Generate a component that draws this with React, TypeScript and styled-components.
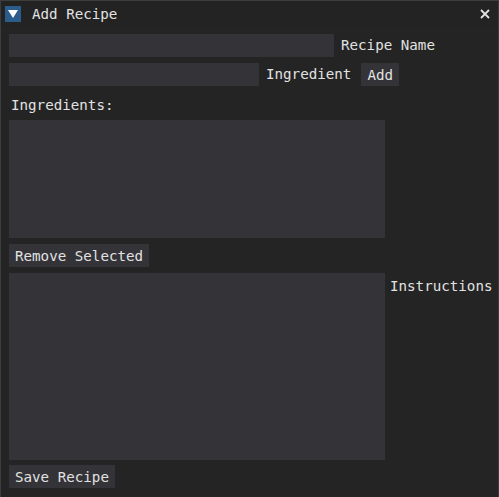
import React from "react";
import styled, { createGlobalStyle } from "styled-components";

const Global = createGlobalStyle`
  html, body { margin: 0; padding: 0; background: #242424; }
  body { width: 499px; height: 497px; overflow: hidden; }
`;

const Win = styled.div`
  box-sizing: border-box;
  width: 499px;
  height: 497px;
  background: #242424;
  border: 1px solid #3d3d3d;
  border-bottom: none;
  font-family: "DejaVu Sans Mono", "Liberation Mono", monospace;
  font-size: 14.2px;
  color: #e2e2e2;
  display: flex;
  flex-direction: column;
`;

const TitleBar = styled.div`
  height: 26px;
  display: flex;
  align-items: center;
  padding: 0 4px;
  gap: 11px;
  background: #232323;
`;

const Collapse = styled.div`
  width: 16px;
  height: 16px;
  background: #2a5d8c;
  display: flex;
  align-items: center;
  justify-content: center;
`;

const Title = styled.span`
  flex: 1;
  line-height: 1;
`;

const Close = styled.div`
  width: 16px;
  height: 16px;
  display: flex;
  align-items: center;
  justify-content: center;
  margin-right: 1px;
`;

const Body = styled.div`
  padding: 7px 8px 0 8px;
  display: flex;
  flex-direction: column;
  gap: 6px;
`;

const Row = styled.div<{ $gap?: number; $top?: boolean }>`
  display: flex;
  align-items: ${(p) => (p.$top ? "flex-start" : "center")};
  gap: ${(p) => p.$gap ?? 6}px;
`;

const Frame = styled.div<{ $w: number; $h: number }>`
  width: ${(p) => p.$w}px;
  height: ${(p) => p.$h}px;
  background: #333338;
  flex: none;
`;

const Label = styled.span<{ $pt?: number }>`
  white-space: nowrap;
  padding-top: ${(p) => p.$pt ?? 0}px;
  line-height: 1;
`;

const Button = styled.div<{ $ml?: number }>`
  height: 23px;
  padding: 0 6px;
  margin-left: ${(p) => p.$ml ?? 0}px;
  background: #333338;
  display: flex;
  align-items: center;
  white-space: nowrap;
  flex: none;
`;

const Text = styled.div<{ $ml?: number; $mt?: number }>`
  margin-left: ${(p) => p.$ml ?? 0}px;
  margin-top: ${(p) => p.$mt ?? 0}px;
  line-height: 18px;
`;

const Left = styled.div<{ $mt?: number }>`
  display: flex;
  margin-top: ${(p) => p.$mt ?? 0}px;
`;

export default function App() {
  return (
    <>
      <Global />
      <Win>
        <TitleBar>
          <Collapse>
            <svg width="12" height="10" viewBox="0 0 12 10">
              <polygon points="1,1 11,1 6,9" fill="#ffffff" />
            </svg>
          </Collapse>
          <Title>Add Recipe</Title>
          <Close>
            <svg width="12" height="12" viewBox="0 0 12 12">
              <path d="M2 2 L10 10 M10 2 L2 10" stroke="#e2e2e2" strokeWidth="1.8" />
            </svg>
          </Close>
        </TitleBar>
        <Body>
          <Row $gap={7}>
            <Frame $w={325} $h={23} />
            <Label>Recipe Name</Label>
          </Row>
          <Row $gap={7}>
            <Frame $w={250} $h={23} />
            <Label>Ingredient</Label>
            <Button $ml={3}>Add</Button>
          </Row>
          <Text $ml={2} $mt={4}>Ingredients:</Text>
          <Frame $w={376} $h={118} />
          <Left>
            <Button>Remove Selected</Button>
          </Left>
          <Row $top $gap={5}>
            <Frame $w={376} $h={187} />
            <Label $pt={6}>Instructions</Label>
          </Row>
          <Left $mt={-1}>
            <Button>Save Recipe</Button>
          </Left>
        </Body>
      </Win>
    </>
  );
}
